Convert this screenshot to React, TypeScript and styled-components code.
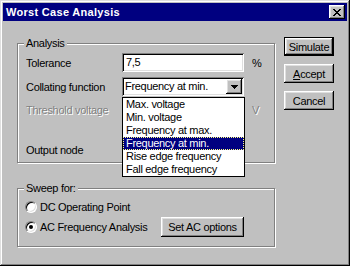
import styled, { createGlobalStyle, css } from "styled-components";

const GlobalStyle = createGlobalStyle`
  html, body {
    margin: 0;
    padding: 0;
    background: #c0c0c0;
  }
  body {
    font-family: "Liberation Sans", Arial, sans-serif;
    font-size: 11px;
    letter-spacing: -0.3px;
    color: #000;
  }
`;

const raised = css`
  box-shadow: inset -1px -1px #000, inset 1px 1px #fff, inset -2px -2px #808080, inset 2px 2px #dfdfdf;
`;

const sunken = css`
  box-shadow: inset 1px 1px #808080, inset -1px -1px #fff, inset 2px 2px #000, inset -2px -2px #dfdfdf;
`;

const opciones = [
  "Max. voltage",
  "Min. voltage",
  "Frequency at max.",
  "Frequency at min.",
  "Rise edge frequency",
  "Fall edge frequency",
];

const App = () => {
  const seleccionada = 3;

  return (
    <>
      <GlobalStyle />
      <Ventana>
        <BarraTitulo>
          <span>Worst Case Analysis</span>
          <BotonCerrar>
            <svg width="8" height="7" viewBox="0 0 8 7" shapeRendering="crispEdges">
              <path d="M0 0h2v1h-2zM6 0h2v1h-2zM1 1h2v1h-2zM5 1h2v1h-2zM2 2h4v1h-4zM3 3h2v1h-2zM2 4h4v1h-4zM1 5h2v1h-2zM5 5h2v1h-2zM0 6h2v1h-2zM6 6h2v1h-2z" fill="#000" />
            </svg>
          </BotonCerrar>
        </BarraTitulo>

        <Cuerpo>
          <ColumnaIzq>
            <Grupo $alto={126}>
              <Leyenda>Analysis</Leyenda>

              <Fila $arriba={0}>
                <Etiqueta>Tolerance</Etiqueta>
                <CajaTexto>7,5</CajaTexto>
                <Unidad>%</Unidad>
              </Fila>

              <Fila $arriba={5}>
                <Etiqueta>Collating function</Etiqueta>
                <Combo>
                  <ComboTexto>Frequency at min.</ComboTexto>
                  <BotonFlecha>
                    <svg width="7" height="4" viewBox="0 0 7 4" shapeRendering="crispEdges">
                      <path d="M0 0h7v1h-7zM1 1h5v1h-5zM2 2h3v1h-3zM3 3h1v1h-1z" fill="#000" />
                    </svg>
                  </BotonFlecha>
                  <Lista>
                    {opciones.map((item, index) => (
                      <ItemLista key={index} $activo={index === seleccionada}>
                        {item}
                      </ItemLista>
                    ))}
                  </Lista>
                </Combo>
              </Fila>

              <Fila $arriba={4}>
                <Etiqueta $deshabilitada>Threshold voltage</Etiqueta>
                <Hueco />
                <Unidad $deshabilitada>V</Unidad>
              </Fila>

              <Fila $arriba={21}>
                <Etiqueta>Output node</Etiqueta>
              </Fila>
            </Grupo>

            <Grupo $alto={65} $margen={19}>
              <Leyenda>Sweep for:</Leyenda>
              <FilaRadio $alto={18}>
                <Radio />
                <TextoRadio>DC Operating Point</TextoRadio>
              </FilaRadio>
              <FilaRadio $alto={20} $arriba={1}>
                <Radio $marcado />
                <TextoRadio $ancho={121}>AC Frequency Analysis</TextoRadio>
                <Boton $ancho={83} $alto={20}>Set AC options</Boton>
              </FilaRadio>
            </Grupo>
          </ColumnaIzq>

          <ColumnaBotones>
            <Boton $porDefecto>Simulate</Boton>
            <Boton>
              <u>A</u>ccept
            </Boton>
            <Boton>Cancel</Boton>
          </ColumnaBotones>
        </Cuerpo>
      </Ventana>
    </>
  );
};

const Ventana = styled.div`
  width: 350px;
  height: 266px;
  box-sizing: border-box;
  padding: 3px;
  background: #c0c0c0;
  box-shadow: inset -1px -1px #000, inset 1px 1px #dfdfdf, inset -2px -2px #808080, inset 2px 2px #fff;
  display: flex;
  flex-direction: column;
`;

const BarraTitulo = styled.div`
  height: 18px;
  background: #000080;
  color: #fff;
  font-weight: bold;
  font-size: 11px;
  letter-spacing: 0.3px;
  display: flex;
  align-items: center;
  justify-content: space-between;
  padding: 0 2px 0 3px;
`;

const BotonCerrar = styled.div`
  width: 16px;
  height: 14px;
  background: #c0c0c0;
  display: flex;
  align-items: center;
  justify-content: center;
  ${raised}
`;

const Cuerpo = styled.div`
  display: flex;
  gap: 9px;
  padding: 16px 0 0 14px;
`;

const ColumnaIzq = styled.div`
  display: flex;
  flex-direction: column;
  width: 258px;
`;

type GrupoProps = {
  $alto: number;
  $margen?: number;
};

const Grupo = styled.fieldset<GrupoProps>`
  margin: ${(p) => p.$margen ?? 0}px 0 0 0;
  padding: 3px 0 0 8px;
  min-width: 0;
  width: 258px;
  height: ${(p) => p.$alto}px;
  box-sizing: border-box;
  border: 1px solid #808080;
  box-shadow: 1px 1px 0 #fff, inset 1px 1px 0 #fff;
`;

const Leyenda = styled.legend`
  margin-left: -2px;
  padding: 0 2px;
  line-height: 13px;
  height: 13px;
  background: #c0c0c0;
`;

type FilaProps = {
  $arriba: number;
};

const Fila = styled.div<FilaProps>`
  display: flex;
  align-items: center;
  height: 19px;
  margin-top: ${(p) => p.$arriba}px;
`;

type DeshabilitadoProps = {
  $deshabilitada?: boolean;
};

const Etiqueta = styled.span<DeshabilitadoProps>`
  width: 96px;
  flex-shrink: 0;
  white-space: nowrap;
  color: ${(p) => (p.$deshabilitada ? "#808080" : "#000")};
  text-shadow: ${(p) => (p.$deshabilitada ? "1px 1px 0 #fff" : "none")};
`;

const Unidad = styled.span<DeshabilitadoProps>`
  margin-left: 8px;
  color: ${(p) => (p.$deshabilitada ? "#808080" : "#000")};
  text-shadow: ${(p) => (p.$deshabilitada ? "1px 1px 0 #fff" : "none")};
`;

const CajaTexto = styled.div`
  width: 122px;
  height: 19px;
  box-sizing: border-box;
  background: #fff;
  padding-left: 4px;
  line-height: 19px;
  ${sunken}
`;

const Hueco = styled.div`
  width: 122px;
  height: 19px;
`;

const Combo = styled.div`
  position: relative;
  width: 122px;
  height: 19px;
  box-sizing: border-box;
  background: #fff;
  display: flex;
  align-items: center;
  padding: 2px;
  ${sunken}
`;

const ComboTexto = styled.span`
  flex: 1;
  padding-left: 1px;
  line-height: 15px;
`;

const BotonFlecha = styled.div`
  width: 16px;
  height: 15px;
  background: #c0c0c0;
  display: flex;
  align-items: center;
  justify-content: center;
  ${raised}
`;

const Lista = styled.div`
  position: absolute;
  top: 20px;
  left: 0;
  width: 123px;
  box-sizing: border-box;
  border: 1px solid #000;
  background: #fff;
  z-index: 2;
`;

type ItemProps = {
  $activo: boolean;
};

const ItemLista = styled.div<ItemProps>`
  height: 13px;
  line-height: 13px;
  padding-left: 3px;
  white-space: nowrap;
  background: ${(p) => (p.$activo ? "#000080" : "#fff")};
  color: ${(p) => (p.$activo ? "#fff" : "#000")};
  outline: ${(p) => (p.$activo ? "1px dotted #ffff80" : "none")};
  outline-offset: -1px;
`;

type FilaRadioProps = {
  $alto: number;
  $arriba?: number;
};

const FilaRadio = styled.div<FilaRadioProps>`
  display: flex;
  align-items: center;
  height: ${(p) => p.$alto}px;
  margin-top: ${(p) => p.$arriba ?? 0}px;
  margin-left: -1px;
`;

type RadioProps = {
  $marcado?: boolean;
};

const Radio = styled.span<RadioProps>`
  width: 12px;
  height: 12px;
  box-sizing: border-box;
  border-radius: 50%;
  background: #fff;
  border: 1px solid;
  border-color: #808080 #fff #fff #808080;
  box-shadow: inset 1px 1px 0 #000, inset -1px -1px 0 #dfdfdf;
  display: flex;
  align-items: center;
  justify-content: center;
  flex-shrink: 0;

  &::after {
    content: "";
    width: 4px;
    height: 4px;
    border-radius: 50%;
    background: ${(p) => (p.$marcado ? "#000" : "transparent")};
  }
`;

type TextoRadioProps = {
  $ancho?: number;
};

const TextoRadio = styled.span<TextoRadioProps>`
  margin-left: 3px;
  width: ${(p) => (p.$ancho ? `${p.$ancho}px` : "auto")};
  white-space: nowrap;
`;

type BotonProps = {
  $porDefecto?: boolean;
  $ancho?: number;
  $alto?: number;
};

const Boton = styled.div<BotonProps>`
  width: ${(p) => p.$ancho ?? 50}px;
  height: ${(p) => p.$alto ?? 19}px;
  box-sizing: border-box;
  background: #c0c0c0;
  display: flex;
  align-items: center;
  justify-content: center;
  flex-shrink: 0;
  ${(p) =>
    p.$porDefecto
      ? css`
          box-shadow: inset 0 0 0 1px #000, inset -2px -2px #000, inset 2px 2px #fff, inset -3px -3px #808080, inset 3px 3px #dfdfdf;
        `
      : raised}
`;

const ColumnaBotones = styled.div`
  display: flex;
  flex-direction: column;
  gap: 8px;
`;

export default App;
